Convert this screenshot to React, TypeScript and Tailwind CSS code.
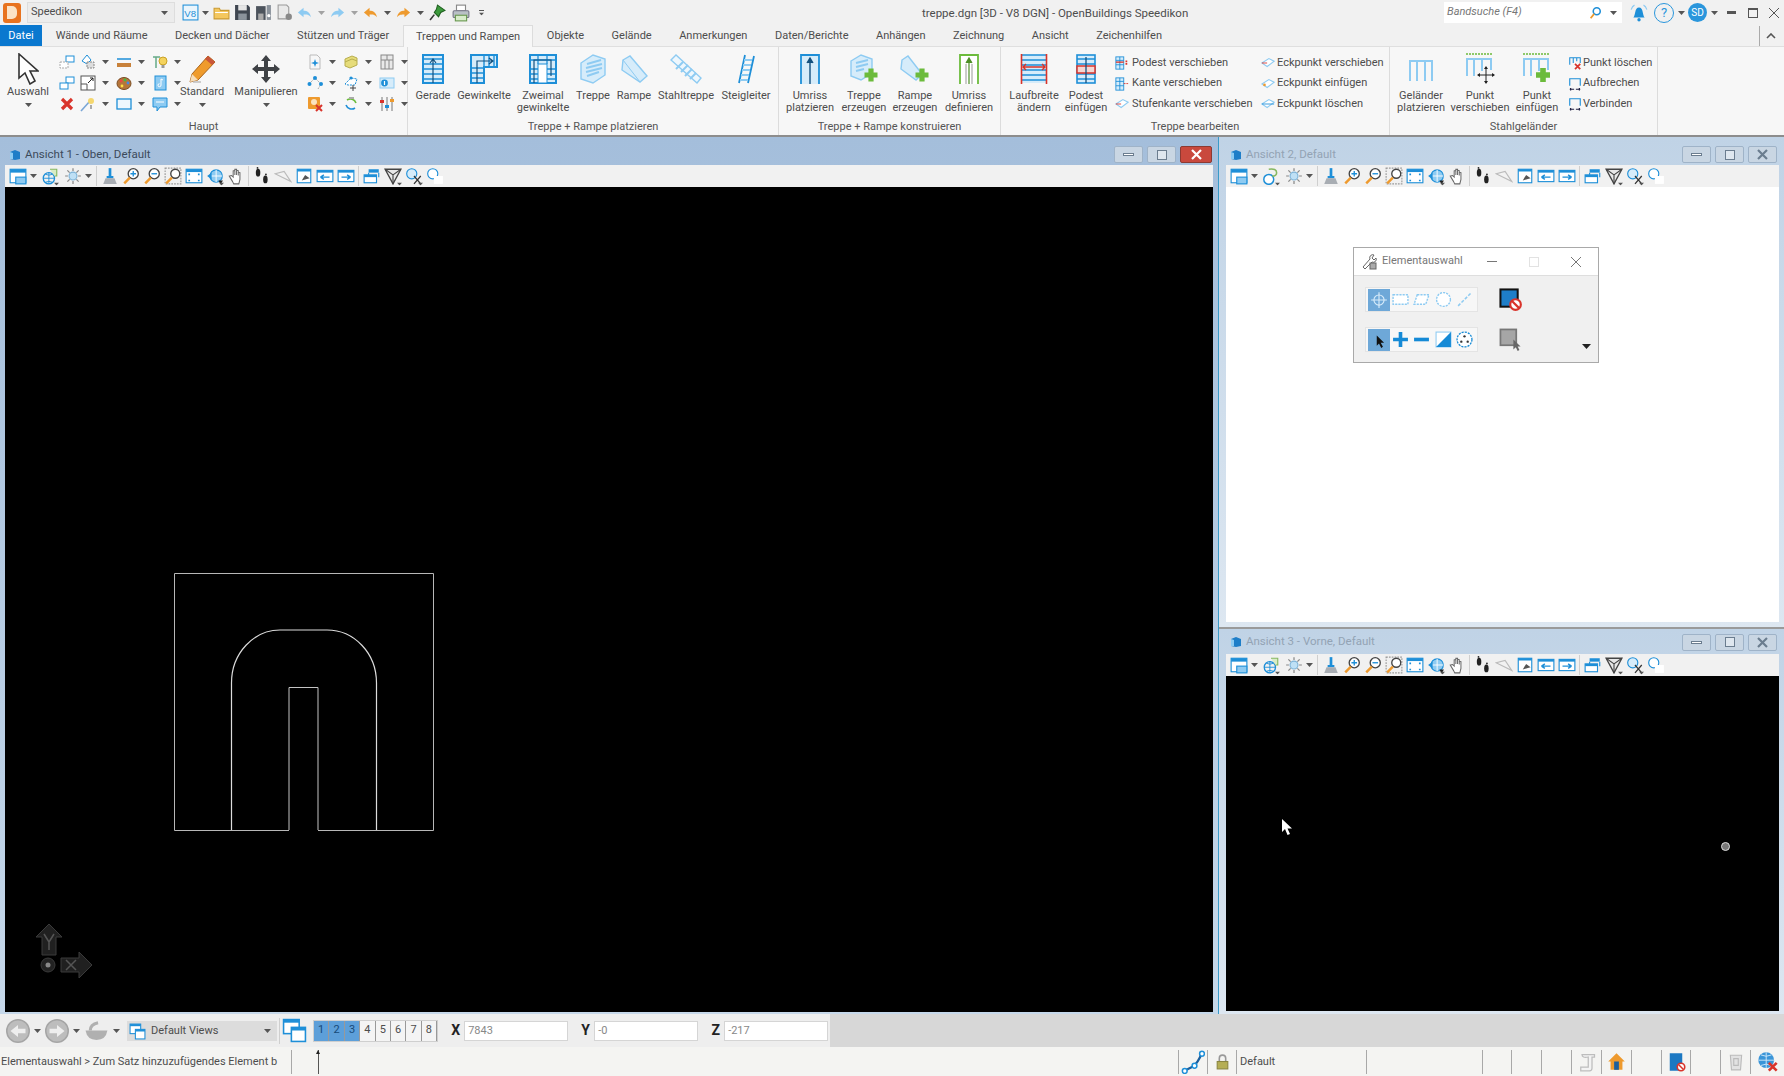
import type { ReactNode } from "react";

const B = "#1e8fd8";
const LB = "#8ecbf2";
const PALE = "#d6ecfa";
const G = "#6cbb3c";
const R = "#d9342b";
const O = "#ee9a2e";

const plus = (x: number, y: number, s = 5, c = G) => (
  <path d={`M${x - s} ${y}H${x + s}M${x} ${y - s}V${y + s}`} stroke={c} strokeWidth={s * 0.8} fill="none" />
);
const cross = (x: number, y: number, s = 3) => (
  <path d={`M${x - s} ${y - s}L${x + s} ${y + s}M${x + s} ${y - s}L${x - s} ${y + s}`} stroke={R} strokeWidth={2} fill="none" />
);

const small: Record<string, ReactNode> = {
  boxes: (
    <>
      <rect x="7" y="2" width="8" height="6" fill="#fff" stroke={B} />
      <rect x="1" y="8" width="8" height="6" fill="#fff" stroke="#aaa" strokeDasharray="2 1" />
    </>
  ),
  boxes2: (
    <>
      <rect x="7" y="2" width="8" height="6" fill="#fff" stroke={B} />
      <rect x="1" y="8" width="8" height="6" fill="#fff" stroke={B} />
    </>
  ),
  shapes: (
    <>
      <path d="M2 7L7 1L11 6L7 10Z" fill="#fff" stroke={B} />
      <rect x="7" y="8" width="7" height="6" fill="#ddd" stroke="#888" strokeDasharray="2 1" />
    </>
  ),
  measure: (
    <>
      <path d="M1 5H15" stroke={B} strokeWidth="1.5" />
      <rect x="1" y="9" width="14" height="4" fill="#c8813a" />
    </>
  ),
  bulbtag: (
    <>
      <path d="M1 3H8M4 3V14" stroke="#6a8" strokeWidth="1.5" />
      <circle cx="11" cy="7" r="4" fill="#f4d35e" stroke="#c9a227" />
      <rect x="9.5" y="11" width="3" height="3" fill="#999" />
    </>
  ),
  resize: (
    <>
      <rect x="1" y="1" width="14" height="14" fill="#fff" stroke="#555" />
      <path d="M1 9H7V15" fill="none" stroke="#555" />
      <path d="M8 8L13 3M10 3H13V6" stroke="#222" fill="none" />
    </>
  ),
  palette: (
    <>
      <ellipse cx="8" cy="8.5" rx="7" ry="6" fill="#b5763a" stroke="#7a4c22" />
      <circle cx="5" cy="6" r="1.4" fill="#e44" />
      <circle cx="9" cy="5" r="1.4" fill="#4b4" />
      <circle cx="12" cy="8" r="1.4" fill="#48e" />
      <circle cx="6" cy="11" r="1.4" fill="#fd4" />
    </>
  ),
  note: (
    <>
      <rect x="3" y="1" width="11" height="14" fill={LB} stroke={B} />
      <path d="M9 4V10M9 4L11 5M9 10A1.5 1.5 0 1 1 7.5 8.7" stroke="#fff" fill="none" />
    </>
  ),
  xred: <path d="M3 3L13 13M13 3L3 13" stroke={R} strokeWidth="3.2" />,
  wand: (
    <>
      <path d="M1 15L10 5" stroke="#7aa6d6" strokeWidth="1.6" />
      <circle cx="11" cy="5" r="3" fill="#f5d76e" />
      <path d="M11 9V13" stroke="#aaa" strokeWidth="2" />
    </>
  ),
  rect: <rect x="1" y="3" width="14" height="10" fill="#eef7fd" stroke={B} strokeWidth="1.3" />,
  bubble: (
    <>
      <path d="M1 2H15V11H8L5 15V11H1Z" fill={LB} stroke={B} />
      <path d="M4 6H12" stroke="#fff" />
    </>
  ),
  docstar: (
    <>
      <path d="M3 1H10L13 4V15H3Z" fill="#f7f7f7" stroke="#bbb" />
      <path d="M8 5L9 8L12 9L9 10L8 13L7 10L4 9L7 8Z" fill={B} />
    </>
  ),
  stack: (
    <>
      <path d="M2 5L9 2L14 4V11L7 14L2 12Z" fill="#e6dc7a" stroke="#b8ae4e" />
      <path d="M2 8L9 5L14 7" stroke="#b8ae4e" fill="none" />
    </>
  ),
  tiles: (
    <>
      <rect x="2" y="1" width="12" height="14" fill="#e9e9e9" stroke="#888" />
      <path d="M2 6H14M8 1V6M6 6V15M10 6V15" stroke="#888" />
    </>
  ),
  nodes: (
    <>
      <path d="M2 9L8 3L14 9L11 14" fill="none" stroke="#aaa" strokeDasharray="2 1" />
      <circle cx="2.5" cy="9" r="2" fill={B} />
      <circle cx="8" cy="3" r="2" fill={B} />
      <circle cx="14" cy="9" r="2" fill={B} />
    </>
  ),
  nodeplus: (
    <>
      <path d="M2 9L8 3L14 4L12 10H5Z" fill="#fff" stroke={B} strokeDasharray="2 1" />
      <circle cx="8" cy="3" r="1.6" fill={B} />
      <path d="M7 13H13M10 10V16" stroke="#444" />
    </>
  ),
  info: (
    <>
      <rect x="1" y="3" width="14" height="10" fill={PALE} stroke={LB} />
      <circle cx="5.5" cy="8" r="3.4" fill={B} />
      <path d="M5.5 6V10" stroke="#fff" strokeWidth="1.2" />
    </>
  ),
  pagex: (
    <>
      <rect x="1" y="1" width="12" height="12" rx="1" fill={O} />
      <circle cx="7" cy="6" r="3" fill="#fbe3c0" />
      {cross(12, 12)}
    </>
  ),
  cycle: (
    <>
      <path d="M4 4A6 6 0 0 1 13 7" stroke={G} strokeWidth="1.6" fill="none" />
      <path d="M12 12A6 6 0 0 1 3 9" stroke={B} strokeWidth="1.6" fill="none" />
      <path d="M6 1H11V3H6Z" fill="#aaa" />
    </>
  ),
  sliders: (
    <>
      <path d="M3 1V15M8 1V15M13 1V15" stroke="#777" />
      <rect x="1" y="4" width="4" height="3" fill={R} />
      <rect x="6" y="9" width="4" height="3" fill={B} />
      <rect x="11" y="3" width="4" height="3" fill={O} />
    </>
  ),
  podest: (
    <>
      <rect x="1" y="1" width="9" height="14" fill={PALE} stroke={B} />
      <path d="M1 5H10M1 10H10M5.5 1V15" stroke={B} />
      <path d="M1 7H10" stroke={R} strokeWidth="1.5" />
      <path d="M13 5V10" stroke={R} strokeWidth="2" strokeDasharray="2 1" />
    </>
  ),
  kante: (
    <>
      <rect x="1" y="1" width="9" height="14" fill={PALE} stroke={B} />
      <path d="M1 5H10M1 10H10M5.5 1V15" stroke={B} />
      <path d="M10 7.5H15" stroke={R} strokeDasharray="2 1" />
    </>
  ),
  blade: (
    <>
      <path d="M1 8L9 3L15 6L7 12Z" fill="#fff" stroke={LB} strokeWidth="1.2" />
      <path d="M1 8L7 8" stroke={R} />
    </>
  ),
  blade2: (
    <>
      <path d="M1 8L9 3L15 6L7 12Z" fill="#fff" stroke={LB} strokeWidth="1.2" />
      <circle cx="4" cy="9" r="1.5" fill={O} />
    </>
  ),
  bladex: (
    <>
      <path d="M1 8L9 3L15 6L7 12Z" fill="#fff" stroke={LB} strokeWidth="1.2" />
      <path d="M1 8H15" stroke={B} />
    </>
  ),
  railx: (
    <>
      <path d="M2 10V2H14V8M6 2V8M10 2V6" fill="none" stroke={B} strokeWidth="1.2" />
      {cross(11, 12)}
    </>
  ),
  brk: (
    <>
      <path d="M2 10V2H14V10" fill="none" stroke={B} strokeWidth="1.3" />
      <path d="M2 14H7M14 14H9M3 12.5V15.5M13 12.5V15.5" stroke="#224" strokeWidth="1.4" />
    </>
  ),
  v8: (
    <>
      <rect x="1" y="1" width="14" height="14" fill="#eaf5fc" stroke={B} />
      <text x="2.2" y="12" fontSize="9" fill={B} fontFamily="Liberation Sans, sans-serif">V8</text>
    </>
  ),
  folder: (
    <>
      <path d="M1 4H6L7 6H15V14H1Z" fill="#f4c75e" stroke="#c99a34" />
      <path d="M2 8H14" stroke="#fff" />
    </>
  ),
  save: (
    <>
      <path d="M1 1H13L15 3V15H1Z" fill="#3f4650" />
      <rect x="4" y="1" width="8" height="5" fill="#e5e5e5" />
      <rect x="4" y="9" width="8" height="6" fill="#8a929b" />
    </>
  ),
  saveall: (
    <>
      <path d="M1 2H10V15H1Z" fill="#4c535c" />
      <rect x="3" y="9" width="5" height="6" fill="#aaa" />
      <path d="M11 1H15V15H11Z" fill="#8a929b" />
      <circle cx="13" cy="11" r="1.5" fill="#fff" />
    </>
  ),
  pagegray: (
    <>
      <path d="M2 1H10L12 3V14H2Z" fill="#e9e9e9" stroke="#999" />
      <circle cx="12" cy="12" r="3" fill="#888" />
    </>
  ),
  undo: <path d="M1 8L7 3V6C11 6 14 8 15 13C13 10 10 10 7 10V13Z" fill={LB} />,
  redo: <path d="M15 8L9 3V6C5 6 2 8 1 13C3 10 6 10 9 10V13Z" fill={LB} />,
  oback: <path d="M1 8L7 3V6C11 6 14 8 15 13C13 10 10 10 7 10V13Z" fill={O} />,
  ofwd: <path d="M15 8L9 3V6C5 6 2 8 1 13C3 10 6 10 9 10V13Z" fill={O} />,
  pin: (
    <>
      <path d="M8 1L15 6L11 8L9 12L5 8L7 5Z" fill="#3c9a3c" stroke="#1f5f1f" />
      <path d="M5 10L1 15" stroke="#333" strokeWidth="1.5" />
    </>
  ),
  print: (
    <>
      <rect x="4" y="1" width="8" height="5" fill="#fff" stroke="#888" />
      <rect x="1" y="6" width="14" height="6" rx="1" fill="#b9c0c6" stroke="#778" />
      <rect x="3" y="10" width="10" height="5" fill="#d8eccb" stroke="#6a9a50" />
    </>
  ),
  view: (
    <>
      <rect x="1" y="2" width="14" height="12" fill="#fff" stroke={B} />
      <rect x="1" y="2" width="14" height="3" fill={B} />
      <rect x="6" y="9" width="9" height="6" fill={LB} stroke={B} />
    </>
  ),
  globe: (
    <>
      <circle cx="7" cy="10" r="5" fill="none" stroke={B} strokeWidth="1.2" />
      <path d="M2 10H12M7 5V15M4 6.5Q7 8 10 6.5M4 13.5Q7 12 10 13.5" stroke={B} strokeWidth=".8" fill="none" />
      <path d="M8 2H14V8H12" fill="#d8ecc5" stroke="#86b862" strokeWidth="1" />
    </>
  ),
  globe2: (
    <>
      <circle cx="6" cy="11" r="4.4" fill="#fff" stroke={B} strokeWidth="1.3" />
      <path d="M6 2Q13 1 13 5Q13 8 9 8" fill="none" stroke="#86b862" strokeWidth="1.4" />
    </>
  ),
  sun: (
    <>
      <circle cx="8" cy="8" r="3.5" fill="#bfe0f5" stroke="#7fb4d8" />
      <path d="M8 1V3.5M8 12.5V15M1 8H3.5M12.5 8H15M3 3L5 5M11 11L13 13M13 3L11 5M5 11L3 13" stroke="#888" strokeWidth="1.1" />
    </>
  ),
  brush: (
    <>
      <path d="M8 1V8" stroke={B} strokeWidth="2.4" />
      <path d="M5 8H11V10H5Z" fill={B} />
      <path d="M4 10H12L14 15H2Z" fill="#a8adb3" />
    </>
  ),
  zin: (
    <>
      <circle cx="10" cy="6" r="4.5" fill="#fff" stroke="#444" strokeWidth="1.2" />
      <path d="M7.5 6H12.5M10 3.5V8.5" stroke={B} strokeWidth="1.2" />
      <path d="M7 9.5L2 14.5" stroke={O} strokeWidth="2.2" />
    </>
  ),
  zout: (
    <>
      <circle cx="10" cy="6" r="4.5" fill="#fff" stroke="#444" strokeWidth="1.2" />
      <path d="M7.5 6H12.5" stroke={B} strokeWidth="1.2" />
      <path d="M7 9.5L2 14.5" stroke={O} strokeWidth="2.2" />
    </>
  ),
  zwin: (
    <>
      <rect x="1" y="1" width="14" height="14" fill="none" stroke="#999" strokeDasharray="1.5 1" />
      <circle cx="10" cy="6" r="4" fill="#fff" stroke="#444" strokeWidth="1.2" />
      <path d="M7 9.5L2 14.5" stroke={O} strokeWidth="2.2" />
    </>
  ),
  fit: (
    <>
      <rect x="1" y="2" width="14" height="12" fill="#fff" stroke={B} />
      <rect x="1" y="2" width="14" height="2.5" fill={B} />
      <path d="M3 6.5H4.5M3 12H4.5M11.5 6.5H13M11.5 12H13" stroke={B} strokeWidth="1.5" />
    </>
  ),
  rotate: (
    <>
      <circle cx="9" cy="8" r="5.5" fill={LB} stroke={B} />
      <path d="M9 2.5V13.5M3.5 8H14.5" stroke="#fff" strokeWidth=".8" />
      <path d="M1 8L5 5V11Z" fill={B} />
      <path d="M11 12L15 12L13 15.5Z" fill="#222" />
    </>
  ),
  hand: (
    <path d="M5 13L2 8L4 7.5L5.5 9V3.5L7 3V7V2L8.5 2V7V3L10 3.2V7.5V4.5L11.5 5V11L10.5 15H6Z" fill="#fff" stroke="#666" strokeWidth=".9" />
  ),
  feet: (
    <>
      <ellipse cx="4.5" cy="5" rx="2" ry="3.5" fill="#222" />
      <ellipse cx="11" cy="11" rx="2" ry="3.5" fill="#222" />
      <circle cx="4" cy="0.8" r=".8" fill="#222" />
      <circle cx="11.5" cy="6.6" r=".8" fill="#222" />
    </>
  ),
  plane: <path d="M1 6L15 13L9 4Z" fill="#f2f2f2" stroke="#bbb" />,
  cam: (
    <>
      <rect x="2" y="2" width="12" height="12" fill="#fff" stroke={B} />
      <rect x="2" y="2" width="12" height="2" fill={B} />
      <path d="M6 12L9 7L13 10L9 11Z" fill="#555" />
    </>
  ),
  prev: (
    <>
      <rect x="1" y="3" width="14" height="10" fill="#fff" stroke={B} />
      <rect x="1" y="3" width="14" height="2" fill={B} />
      <path d="M4 9H12M4 9L7 7M4 9L7 11" stroke={B} strokeWidth="1.3" fill="none" />
    </>
  ),
  next: (
    <>
      <rect x="1" y="3" width="14" height="10" fill="#fff" stroke={B} />
      <rect x="1" y="3" width="14" height="2" fill={B} />
      <path d="M4 9H12M12 9L9 7M12 9L9 11" stroke={B} strokeWidth="1.3" fill="none" />
    </>
  ),
  copy: (
    <>
      <rect x="5" y="2" width="9" height="3" fill={B} />
      <path d="M5 5V7M14 5V9" stroke={B} />
      <rect x="1" y="7" width="11" height="7" fill="#fff" stroke={B} />
      <rect x="1" y="7" width="11" height="2" fill={B} />
    </>
  ),
  funnel: (
    <>
      <path d="M1 2L15 2L8 15Z" fill="#e8e8e8" stroke="#444" strokeWidth="1.2" />
      <path d="M1 2L8 7L15 2M8 7V15" stroke="#444" fill="none" />
    </>
  ),
  clip: (
    <>
      <circle cx="6" cy="6" r="4.5" fill={PALE} stroke={B} />
      <path d="M8 8L14 15M14 8L8 15" stroke="#333" strokeWidth="1.1" />
    </>
  ),
  clip2: (
    <>
      <circle cx="6" cy="6" r="4.5" fill="#fff" stroke={B} />
      <rect x="7" y="8" width="8" height="7" fill="#fff" />
    </>
  ),
  tool: (
    <>
      <path d="M2 13L9 5A3 3 0 0 1 13 1L11 4L13 6L15 4A3 3 0 0 1 11 8L4 15Z" fill="#fff" stroke="#666" />
      <rect x="9" y="9" width="6" height="6" fill="#aaa" stroke="#666" />
    </>
  ),
  bell: (
    <>
      <path d="M3 12C5 10 4 3 8 3C12 3 11 10 13 12Z" fill={B} />
      <circle cx="8" cy="14" r="1.5" fill={B} />
      <path d="M1 5Q2 2 4 1M15 5Q14 2 12 1" stroke={LB} fill="none" />
    </>
  ),
  search: (
    <>
      <circle cx="10" cy="6" r="4" fill="none" stroke={B} strokeWidth="1.8" />
      <path d="M7 9L3 14" stroke={O} strokeWidth="2" />
    </>
  ),
  backc: (
    <>
      <circle cx="8" cy="8" r="7.5" fill="#bdbdbd" stroke="#a5a5a5" />
      <path d="M3 8L8 4V6.5H13V9.5H8V12Z" fill="#eee" />
    </>
  ),
  fwdc: (
    <>
      <circle cx="8" cy="8" r="7.5" fill="#bdbdbd" stroke="#a5a5a5" />
      <path d="M13 8L8 4V6.5H3V9.5H8V12Z" fill="#eee" />
    </>
  ),
  bowl: (
    <>
      <path d="M1 8H15Q14 14 8 14Q2 14 1 8Z" fill="#b0b0b0" />
      <path d="M4 8Q4 4 9 3" stroke="#b0b0b0" strokeWidth="2" fill="none" />
    </>
  ),
  dviews: (
    <>
      <rect x="1" y="1" width="10" height="9" fill="#fff" stroke={B} />
      <rect x="1" y="1" width="10" height="2" fill={B} />
      <rect x="6" y="6" width="9" height="9" fill="#fff" stroke={B} />
      <rect x="6" y="6" width="9" height="2" fill={B} />
    </>
  ),
  path: (
    <>
      <path d="M2 14L8 11Q11 9 14 2" stroke="#1d5f9c" strokeWidth="1.5" fill="none" />
      <circle cx="2.5" cy="14" r="1.6" fill="#fff" stroke={B} />
      <circle cx="9" cy="10.5" r="1.6" fill="#fff" stroke={B} />
      <circle cx="14" cy="2.5" r="1.6" fill="#fff" stroke={B} />
    </>
  ),
  lock: (
    <>
      <path d="M5 8V5A3 3 0 0 1 11 5V8" fill="none" stroke="#999" strokeWidth="1.5" />
      <rect x="3" y="8" width="10" height="7" fill="#b5ae54" stroke="#8a8540" />
    </>
  ),
  scroll: <path d="M4 2H14V4H12V13Q12 15 10 15H3V12H9V4Q4 5 4 2Z" fill="#f3f3f3" stroke="#bdbdbd" />,
  home: (
    <>
      <path d="M8 1L15 8H13V15H3V8H1Z" fill={O} />
      <rect x="6" y="8" width="4" height="7" fill="#1d5f9c" />
    </>
  ),
  book: (
    <>
      <rect x="3" y="1" width="10" height="14" fill="#1c78c2" />
      <circle cx="12" cy="12" r="3" fill="#fff" stroke={R} strokeWidth="1.3" />
      <path d="M10 10L14 14" stroke={R} strokeWidth="1.2" />
    </>
  ),
  docg: (
    <>
      <path d="M3 2H13L12 15H4Z" fill="#e2e2e2" stroke="#bbb" />
      <path d="M6 5H10V11H6Z" fill="none" stroke="#bbb" />
    </>
  ),
  globex: (
    <>
      <circle cx="7" cy="7" r="6" fill="#3a95d8" />
      <path d="M1 7H13M7 1V13M3 3Q7 5 11 3M3 11Q7 9 11 11" stroke="#cfe8fa" strokeWidth=".7" fill="none" />
      {cross(12, 12)}
    </>
  ),
  selRect: <rect x="1" y="3.5" width="14" height="9" fill="#fff" stroke={LB} strokeWidth="1.3" strokeDasharray="2 1" />,
  selPara: <path d="M4 3.5H15L12 12.5H1Z" fill="#fff" stroke={LB} strokeWidth="1.3" strokeDasharray="2 1" />,
  selCirc: <circle cx="8" cy="8" r="6.5" fill="#fff" stroke={LB} strokeWidth="1.3" strokeDasharray="2 1" />,
  selLine: <path d="M2 14L14 2" stroke={LB} strokeWidth="1.4" strokeDasharray="3 1.5" />,
  selAll: (
    <>
      <circle cx="8" cy="8" r="4.5" fill="none" stroke="#d8ecfa" />
      <path d="M8 1V15M1 8H15" stroke="#d8ecfa" />
    </>
  ),
  arrowB: <path d="M6 4L6 13L8 11L10 15L11.5 14L9.5 10.5H12.5Z" fill="#111" />,
  plusB: <path d="M1 8H15M8 1V15" stroke="#158ad6" strokeWidth="3.4" />,
  minusB: <path d="M1 8H15" stroke="#158ad6" strokeWidth="3.4" />,
  invert: (
    <>
      <rect x="1" y="1" width="14" height="14" fill="#fff" stroke="#8ecbf2" />
      <path d="M15 1V15H1Z" fill="#158ad6" />
    </>
  ),
  selDots: (
    <>
      <circle cx="8" cy="8" r="7" fill="#fff" stroke="#158ad6" strokeWidth="1.2" strokeDasharray="2 1" />
      <circle cx="8" cy="5" r="1.1" fill="#333" />
      <circle cx="5" cy="10" r="1.1" fill="#333" />
      <circle cx="11" cy="10" r="1.1" fill="#333" />
    </>
  ),
  noSel: (
    <>
      <rect x="1" y="1" width="12" height="12" fill="#1e7ec8" stroke="#111" strokeWidth="1.4" />
      <circle cx="11.5" cy="11.5" r="3.7" fill="#fff" stroke={R} strokeWidth="1.5" />
      <path d="M9 9L14 14" stroke={R} strokeWidth="1.5" />
    </>
  ),
  grayArrow: (
    <>
      <rect x="1" y="1" width="11" height="11" fill="#a6a6a6" stroke="#777" strokeWidth="1.2" />
      <path d="M10 8L10 15L11.7 13.4L13 16L14.2 15.3L13 12.8H15Z" fill="#666" />
    </>
  ),
};

function I({ n, s = 16, className }: { n: string; s?: number; className?: string }) {
  return (
    <svg width={s} height={s} viewBox="0 0 16 16" className={className ?? "shrink-0"}>
      {small[n]}
    </svg>
  );
}

function Caret({ className }: { className?: string }) {
  return (
    <svg width="7" height="4" viewBox="0 0 7 4" className={className ?? "shrink-0"}>
      <path d="M0 0H7L3.5 4Z" fill="#555" />
    </svg>
  );
}

const stairs = (w: number, h: number) => {
  const rungs = [];
  for (let y = 5; y < h - 1; y += 5) rungs.push(`M1 ${y}H${w - 1}`);
  return rungs.join("");
};

const bigIcons: Record<string, ReactNode> = {
  gerade: (
    <svg width="22" height="30" viewBox="0 0 22 30">
      <rect x="1" y="1" width="20" height="28" fill={PALE} stroke={B} strokeWidth="2" />
      <path d={stairs(22, 30)} stroke={B} strokeWidth="1.5" />
      <path d="M11 29V6M8 9L11 5L14 9" stroke="#14517f" strokeWidth="1.2" fill="none" />
    </svg>
  ),
  gewinkelt: (
    <svg width="28" height="30" viewBox="0 0 28 30">
      <path d="M1 29V1H27V13H14V29Z" fill={PALE} stroke={B} strokeWidth="2" />
      <path d="M1 14H14M1 19H14M1 24H14M14 1V13M19 1V13M24 1V13" stroke={B} strokeWidth="1.4" />
      <path d="M7 29V7H22M19 4L23 7L19 10" stroke="#14517f" strokeWidth="1.2" fill="none" />
    </svg>
  ),
  zweimal: (
    <svg width="28" height="30" viewBox="0 0 28 30">
      <rect x="1" y="1" width="26" height="28" fill={PALE} stroke={B} strokeWidth="2" />
      <rect x="9" y="10" width="9" height="19" fill="#fff" stroke={B} />
      <path d="M1 15H9M1 20H9M1 25H9M18 15H27M18 20H27M18 25H27M1 6H27M9 1V10M18 1V10" stroke={B} strokeWidth="1.3" />
      <path d="M5 29V6H22V22" stroke="#14517f" strokeWidth="1.2" fill="none" />
    </svg>
  ),
  treppe: (
    <svg width="28" height="32" viewBox="0 0 28 32">
      <path d="M2 10L14 2L26 6V22L14 30L2 26Z" fill={PALE} stroke={LB} strokeWidth="1.4" />
      <path d="M8 11L22 7M7 15L23 11M7 19L23 15M8 23L20 19" stroke={LB} strokeWidth="2" />
    </svg>
  ),
  rampe: (
    <svg width="28" height="30" viewBox="0 0 28 30">
      <path d="M3 6L10 2L27 22L20 28L2 16Z" fill={PALE} stroke={LB} strokeWidth="1.4" />
      <path d="M3 6L20 28" stroke={LB} />
    </svg>
  ),
  stahl: (
    <svg width="32" height="30" viewBox="0 0 32 30">
      <path d="M1 6L6 1L31 24L27 29Z" fill="#eef7fd" stroke={LB} strokeWidth="1.4" />
      <path d="M6 15L13 8M11 18L18 11M15 22L22 15M20 25L26 19" stroke={LB} strokeWidth="2" />
    </svg>
  ),
  leiter: (
    <svg width="20" height="30" viewBox="0 0 20 30">
      <path d="M9 1L3 29M18 2L12 29" stroke={B} strokeWidth="1.8" />
      <path d="M8 6H16M7 11H15M6 16H14M5 21H13M4 26H12" stroke={LB} strokeWidth="2" />
    </svg>
  ),
  umrissP: (
    <svg width="20" height="30" viewBox="0 0 20 30">
      <path d="M1 30V1H19V30" fill={PALE} stroke={B} strokeWidth="1.8" />
      <path d="M10 30V5M7 9L10 4L13 9" stroke="#14517f" strokeWidth="1.4" fill="#14517f" />
    </svg>
  ),
  treppeE: (
    <svg width="30" height="30" viewBox="0 0 30 30">
      <path d="M2 7L12 1L23 5V19L12 26L2 22Z" fill={PALE} stroke={LB} strokeWidth="1.4" />
      <path d="M7 9L19 6M7 13L19 10M7 17L15 15" stroke={LB} strokeWidth="2" />
      {plus(22, 21, 6.5)}
    </svg>
  ),
  rampeE: (
    <svg width="30" height="30" viewBox="0 0 30 30">
      <path d="M2 6L8 2L22 20L16 26L1 15Z" fill={PALE} stroke={LB} strokeWidth="1.4" />
      {plus(22, 21, 6.5)}
    </svg>
  ),
  umrissD: (
    <svg width="20" height="30" viewBox="0 0 20 30">
      <path d="M1 30V1H19V30" fill="#fff" stroke={G} strokeWidth="1.8" />
      <path d="M7 30V10M13 30V10" stroke="#999" />
      <path d="M10 30V5M7 9L10 4L13 9" stroke="#4d8f27" strokeWidth="1.2" fill="#4d8f27" />
    </svg>
  ),
  laufbreite: (
    <svg width="28" height="30" viewBox="0 0 28 30">
      <rect x="2" y="1" width="24" height="28" fill={PALE} />
      <path d="M2 1H26M2 6H26M2 11H26M2 16H26M2 21H26M2 26H26" stroke={B} strokeWidth="1.5" />
      <path d="M1.5 0V30M26.5 0V30" stroke={R} strokeWidth="1.6" />
      <path d="M3 13H25M6 10L3 13L6 16M22 10L25 13L22 16" stroke={R} strokeWidth="1.4" fill="none" />
    </svg>
  ),
  podestE: (
    <svg width="20" height="30" viewBox="0 0 20 30">
      <rect x="1" y="1" width="18" height="28" fill={PALE} stroke={B} strokeWidth="1.6" />
      <path d={stairs(20, 30)} stroke={B} strokeWidth="1.3" />
      <rect x="1" y="12" width="18" height="7" fill="#f3d8d4" stroke={R} strokeWidth="1.5" />
      <path d="M10 29V3" stroke="#14517f" strokeWidth="1.3" />
    </svg>
  ),
  gelaender: (
    <svg width="26" height="30" viewBox="0 0 26 30">
      <path d="M1 7H25M2 7V27M9 7V27M17 7V27M24 7V27" stroke={LB} strokeWidth="2" fill="none" />
    </svg>
  ),
  gelaenderV: (
    <svg width="30" height="32" viewBox="0 0 30 32">
      <path d="M1 1H27" stroke={G} strokeWidth="1.6" strokeDasharray="2 1" />
      <path d="M1 6H27M2 6V23M9 6V23M17 6V18M26 6V17" stroke={LB} strokeWidth="2" fill="none" />
      <path d="M21 14V30M13 22H29" stroke="#222" strokeWidth="1" />
      <path d="M21 13L19 16H23ZM21 31L19 28H23ZM12 22L15 20V24ZM30 22L27 20V24Z" fill="#222" />
    </svg>
  ),
  gelaenderE: (
    <svg width="30" height="32" viewBox="0 0 30 32">
      <path d="M1 1H27" stroke={G} strokeWidth="1.6" strokeDasharray="2 1" />
      <path d="M1 6H27M2 6V23M9 6V23M17 6V18M26 6V17" stroke={LB} strokeWidth="2" fill="none" />
      {plus(21, 22, 7)}
    </svg>
  ),
  pencil: (
    <svg width="30" height="30" viewBox="0 0 30 30">
      <path d="M5 20L21 2L28 8L11 26L3 28Z" fill="#ef9b2c" stroke="#a9641a" />
      <path d="M21 2L28 8L25 11L18 5Z" fill="#c9563a" />
      <path d="M3 28L5 20L11 26Z" fill="#f5dcb9" />
      <path d="M6 28H14" stroke="#bbb" strokeWidth="1.4" />
    </svg>
  ),
  move: (
    <svg width="30" height="30" viewBox="0 0 30 30">
      <path d="M15 1L20 7H17V13H23V10L29 15L23 20V17H17V23H20L15 29L10 23H13V17H7V20L1 15L7 10V13H13V7H10Z" fill="#3f4246" />
    </svg>
  ),
  arrow: (
    <svg width="22" height="32" viewBox="0 0 22 32">
      <path d="M2 1V25L8 20L13 31L18 28L13 18H21Z" fill="#fff" stroke="#333" strokeWidth="1.6" />
    </svg>
  ),
};

function Big({ icon, label, second, width, caret }: { icon: string; label: string; second?: string; width: number; caret?: boolean }) {
  return (
    <div className="flex shrink-0 flex-col items-center" style={{ width }}>
      <div className="flex h-[32px] items-center justify-center">{bigIcons[icon]}</div>
      <div className={`${caret ? "mt-[1px]" : "mt-[5px]"} whitespace-nowrap text-center leading-[12px]`}>
        {label}
        {second && <div>{second}</div>}
      </div>
      {caret && <Caret className="mt-[5px]" />}
    </div>
  );
}

function Group({ label, width, last, children }: { label: string; width: number; last?: boolean; children: ReactNode }) {
  return (
    <div
      className={`flex shrink-0 flex-col ${last ? "" : "border-r border-[#dcdcdc]"}`}
      style={{ width }}
    >
      <div className="flex h-[73px] pt-[6px]">{children}</div>
      <div className="h-[14px] text-center leading-[14px] text-[#555]">{label}</div>
    </div>
  );
}

function SmallList({ items, width, iconWidth }: { items: [string, string][]; width: number; iconWidth: number }) {
  return (
    <div className="flex shrink-0 flex-col gap-[4.5px] pt-[2px]" style={{ width }}>
      {items.map(([icon, text]) => (
        <div key={text} className="flex h-[16px] items-center whitespace-nowrap">
          <div className="flex justify-center" style={{ width: iconWidth }}>
            <I n={icon} s={14} />
          </div>
          <span>{text}</span>
        </div>
      ))}
    </div>
  );
}

function MiniGrid({ rows, width }: { rows: string[][]; width: number }) {
  return (
    <div className="flex shrink-0 flex-col gap-[5px] pt-[1px]" style={{ width }}>
      {rows.map((row, r) => (
        <div key={r} className="flex h-[16px] items-center">
          {row.map((name, i) => (
            <span key={i} className="flex items-center">
              {name === "^" ? (
                <Caret className="mx-[4px]" />
              ) : (
                <span className="flex w-[21px] justify-center">
                  <I n={name} />
                </span>
              )}
            </span>
          ))}
        </div>
      ))}
    </div>
  );
}

function TitleBar() {
  const qat = ["folder", "save", "saveall", "pagegray"];
  return (
    <div className="flex h-[25px] shrink-0 items-center bg-[#f1f1f1]">
      <div className="ml-[3px] mr-[6px] flex h-[20px] w-[18px] items-center justify-center rounded-[3px] bg-[#e8731f]">
        <div className="h-[13px] w-[10px] rounded-r-[5px] bg-[#fbe3c6]" />
      </div>
      <div className="flex h-[21px] w-[148px] items-center justify-between border border-[#dddddd] bg-[#ececec] pl-[3px] pr-[6px]">
        Speedikon
        <Caret />
      </div>
      <div className="ml-[7px] flex items-center">
        <I n="v8" s={17} />
        <Caret className="ml-[3px] mr-[4px]" />
        {qat.map((q) => (
          <span key={q} className="mr-[4px]">
            <I n={q} s={17} />
          </span>
        ))}
        <span className="flex items-center gap-[5.5px]">
          <I n="undo" s={15} />
          <Caret className="opacity-50" />
          <I n="redo" s={15} />
          <Caret className="opacity-50" />
          <I n="oback" s={15} />
          <Caret />
          <I n="ofwd" s={15} />
          <Caret />
          <I n="pin" s={17} />
          <I n="print" s={18} />
          <span className="ml-[3px] flex flex-col items-center gap-[1px]">
            <span className="h-px w-[5px] bg-[#555]" />
            <Caret className="scale-75" />
          </span>
        </span>
      </div>
      <div className="ml-[437px] whitespace-nowrap pt-[2px] text-[11.5px]">treppe.dgn [3D - V8 DGN] - OpenBuildings Speedikon</div>
      <div className="ml-auto flex items-center">
        <div className="flex h-[21px] w-[178px] items-center bg-white pl-[3px] pr-[5px] italic text-[#777]">
          Bandsuche (F4)
          <I n="search" s={14} className="ml-auto" />
          <Caret className="ml-[8px]" />
        </div>
        <span className="ml-[8px]">
          <I n="bell" s={18} />
        </span>
        <span className="ml-[6px] flex h-[20px] w-[20px] items-center justify-center rounded-full border-[1.5px] border-[#2a96dc] text-[13px] text-[#2a96dc]">?</span>
        <Caret className="ml-[4px]" />
        <span className="ml-[3px] flex h-[19px] w-[19px] items-center justify-center rounded-full bg-[#2a96dc] text-[10px] text-white">SD</span>
        <Caret className="ml-[4px]" />
        <span className="ml-[9px] h-[3px] w-[9px] bg-[#555]" />
        <span className="ml-[12px] h-[10px] w-[10px] border border-t-2 border-[#555]" />
        <svg width="10" height="10" viewBox="0 0 10 10" className="ml-[11px] mr-[5px]">
          <path d="M0 0L10 10M10 0L0 10" stroke="#555" />
        </svg>
      </div>
    </div>
  );
}

function Tabs() {
  const tabs = [
    "Wände und Räume",
    "Decken und Dächer",
    "Stützen und Träger",
    "Treppen und Rampen",
    "Objekte",
    "Gelände",
    "Anmerkungen",
    "Daten/Berichte",
    "Anhängen",
    "Zeichnung",
    "Ansicht",
    "Zeichenhilfen",
  ];
  return (
    <div className="flex h-[22px] shrink-0 items-stretch border-b border-[#dfdfdf] bg-[#f1f1f1]">
      <div className="flex w-[42px] items-center justify-center bg-[#0a78cf] pt-[1px] text-white">Datei</div>
      <div className="flex">
        {tabs.map((t) => (
          <div
            key={t}
            className={
              t === "Treppen und Rampen"
                ? "relative z-10 -mb-px flex items-center border border-b-0 border-[#dcdcdc] bg-[#f7f7f7] px-[12px] pt-[2px]"
                : "flex items-center px-[13.75px] pt-[2px]"
            }
          >
            {t}
          </div>
        ))}
      </div>
      <div className="ml-auto flex items-center">
        <span className="h-[20px] w-px bg-[#aaa]" />
        <svg width="10" height="6" viewBox="0 0 10 6" className="ml-[6px] mr-[8px]">
          <path d="M1 5L5 1L9 5" stroke="#555" strokeWidth="1.6" fill="none" />
        </svg>
      </div>
    </div>
  );
}

function Ribbon() {
  return (
    <div className="flex h-[90px] shrink-0 border-b-2 border-[#8d8d8d] bg-[#f7f7f7]">
      <Group label="Haupt" width={408}>
        <Big icon="arrow" label="Auswahl" width={56} caret />
        <MiniGrid
          width={120}
          rows={[
            ["boxes", "shapes", "^", "measure", "^", "bulbtag", "^"],
            ["boxes2", "resize", "^", "palette", "^", "note", "^"],
            ["xred", "wand", "^", "rect", "^", "bubble", "^"],
          ]}
        />
        <Big icon="pencil" label="Standard" width={52} caret />
        <Big icon="move" label="Manipulieren" width={76} caret />
        <MiniGrid
          width={103}
          rows={[
            ["docstar", "^", "stack", "^", "tiles", "^"],
            ["nodes", "^", "nodeplus", "^", "info", "^"],
            ["pagex", "^", "cycle", "^", "sliders", "^"],
          ]}
        />
      </Group>
      <Group label="Treppe + Rampe platzieren" width={371}>
        <Big icon="gerade" label="Gerade" width={50} />
        <Big icon="gewinkelt" label="Gewinkelte" width={52} />
        <Big icon="zweimal" label="Zweimal" second="gewinkelte" width={66} />
        <Big icon="treppe" label="Treppe" width={34} />
        <Big icon="rampe" label="Rampe" width={48} />
        <Big icon="stahl" label="Stahltreppe" width={56} />
        <Big icon="leiter" label="Steigleiter" width={64} />
      </Group>
      <Group label="Treppe + Rampe konstruieren" width={222}>
        <Big icon="umrissP" label="Umriss" second="platzieren" width={62} />
        <Big icon="treppeE" label="Treppe" second="erzeugen" width={46} />
        <Big icon="rampeE" label="Rampe" second="erzeugen" width={56} />
        <Big icon="umrissD" label="Umriss" second="definieren" width={52} />
      </Group>
      <Group label="Treppe bearbeiten" width={389}>
        <Big icon="laufbreite" label="Laufbreite" second="ändern" width={66} />
        <Big icon="podestE" label="Podest" second="einfügen" width={38} />
        <div className="w-[7px] shrink-0" />
        <SmallList
          width={146}
          iconWidth={20}
          items={[
            ["podest", "Podest verschieben"],
            ["kante", "Kante verschieben"],
            ["blade", "Stufenkante verschieben"],
          ]}
        />
        <SmallList
          width={130}
          iconWidth={19}
          items={[
            ["blade", "Eckpunkt verschieben"],
            ["blade2", "Eckpunkt einfügen"],
            ["bladex", "Eckpunkt löschen"],
          ]}
        />
      </Group>
      <Group label="Stahlgeländer" width={268}>
        <Big icon="gelaender" label="Geländer" second="platzieren" width={62} />
        <Big icon="gelaenderV" label="Punkt" second="verschieben" width={56} />
        <Big icon="gelaenderE" label="Punkt" second="einfügen" width={58} />
        <SmallList
          width={90}
          iconWidth={17}
          items={[
            ["railx", "Punkt löschen"],
            ["brk", "Aufbrechen"],
            ["brk", "Verbinden"],
          ]}
        />
      </Group>
    </div>
  );
}

function ViewTools({ alt }: { alt?: boolean }) {
  const T = ({ n, caret }: { n: string; caret?: boolean }) => (
    <span className="relative flex w-[21px] shrink-0 justify-center">
      <I n={n} s={18} />
      {caret && <Caret className="absolute bottom-[-1px] right-[0px] scale-75" />}
    </span>
  );
  const Sep = () => <span className="mx-[2px] h-[20px] w-px shrink-0 bg-[#cfcfcf]" />;
  return (
    <div className="flex h-[22px] shrink-0 items-center bg-[#f1f1f1] pl-[2px]">
      <T n="view" />
      <Caret className="mx-[2px]" />
      <T n={alt ? "globe2" : "globe"} caret />
      <span className="w-[2px]" />
      <T n="sun" />
      <Caret className="mx-[2px]" />
      <Sep />
      <T n="brush" />
      <T n="zin" />
      <T n="zout" />
      <T n="zwin" />
      <T n="fit" />
      <T n="rotate" caret />
      <T n="hand" />
      <Sep />
      <T n="feet" />
      <T n="plane" />
      <T n="cam" />
      <T n="prev" />
      <T n="next" />
      <Sep />
      <T n="copy" />
      <T n="funnel" caret />
      <T n="clip" caret />
      <T n="clip2" />
    </div>
  );
}

function WinButtons({ active, gapRight }: { active?: boolean; gapRight: number }) {
  const btn = "flex h-[17px] w-[29px] items-center justify-center rounded-[2px] border border-[#9fb3c8] bg-[#c9d6e3]";
  return (
    <div className="ml-auto flex gap-[4px]" style={{ marginRight: gapRight }}>
      <div className={btn}>
        <span className="h-[3px] w-[11px] border border-[#6b7d8f] bg-white" />
      </div>
      <div className={btn}>
        <span className="flex h-[10px] w-[10px] items-center justify-center border border-[#6b7d8f] bg-[#dfe7ef]" />
      </div>
      <div className={active ? "flex h-[17px] w-[32px] items-center justify-center rounded-[2px] border border-[#8d3a32] bg-[#c9493d]" : btn}>
        <svg width="11" height="11" viewBox="0 0 11 11">
          <path d="M1 1L10 10M10 1L1 10" stroke={active ? "#fff" : "#6b7d8f"} strokeWidth="2.2" />
        </svg>
      </div>
    </div>
  );
}

function ViewWindow({
  title,
  active,
  tall,
  alt,
  className,
  right,
  children,
}: {
  title: string;
  active?: boolean;
  tall?: boolean;
  alt?: boolean;
  className: string;
  right: number;
  children: ReactNode;
}) {
  return (
    <div
      className={`relative flex flex-col pb-[2px] pr-[5px] ${className} ${
        active ? "bg-gradient-to-b from-[#a4bedb] to-[#c6d8ea]" : "bg-gradient-to-b from-[#c0d3e6] to-[#dde7f1]"
      }`}
    >
      <div className={`flex shrink-0 items-center ${tall ? "h-[28px] pt-[7px]" : "h-[25px] pt-[1px]"}`}>
        <svg width="12" height="12" viewBox="0 0 12 12" className="ml-[4px] mr-[4px] shrink-0">
          <path d="M1 3L6 1L11 3V10L6 11L1 10Z" fill="#1e7ec8" />
          <path d="M1 3L4 4V10H1Z" fill="#8ecbf2" />
        </svg>
        <span className={`text-[11.5px] ${active ? "text-[#3c4a5a]" : "text-[#93a3b4]"}`}>{title}</span>
        <WinButtons active={active} gapRight={right} />
      </div>
      <ViewTools alt={alt} />
      {children}
    </div>
  );
}

function Triad() {
  return (
    <svg width="60" height="60" viewBox="0 0 60 60" className="absolute bottom-[30px] left-[28px]">
      <path d="M3 15L16 2L29 15H23V33H9V15Z" fill="#202020" stroke="#3a3a3a" />
      <path d="M11 12L16 20L21 12M16 20V28" stroke="#555" strokeWidth="1.5" fill="none" />
      <circle cx="15" cy="43" r="7" fill="#222" stroke="#3a3a3a" />
      <circle cx="15" cy="43" r="2.5" fill="#888" />
      <path d="M28 36H46V30L59 43L46 56V50H28Z" fill="#202020" stroke="#3a3a3a" />
      <path d="M33 38L43 48M43 38L33 48" stroke="#555" strokeWidth="1.5" />
    </svg>
  );
}

function Drawing() {
  return (
    <svg width="261" height="260" viewBox="0 0 261 260" className="absolute left-[169px] top-[386px]">
      <path d="M115 257.5H0.5V0.5H259.5V257.5H144" fill="none" stroke="#b8b8b8" />
      <path
        d="M57.5 257V110C57.5 80 80 57 106 57H153C180 57 202.5 80 202.5 110V257"
        fill="none"
        stroke="#dcdcdc"
        strokeWidth="1.2"
      />
      <path d="M115 257V114.5H144V257" fill="none" stroke="#c4c4c4" />
    </svg>
  );
}

function ElementDialog() {
  const first = ["selAll", "selRect", "selPara", "selCirc", "selLine"];
  const second = ["arrowB", "plusB", "minusB", "invert", "selDots"];
  const Row = ({ items }: { items: string[] }) => (
    <div className="flex h-[25px] w-[113px] items-center border border-[#e4e4e4] bg-[#f7f7f7] pl-[2px]">
      {items.map((n, i) => (
        <span
          key={n}
          className={`flex h-[22px] w-[21.5px] items-center justify-center ${i === 0 ? "bg-[#6ea8d8]" : ""}`}
        >
          <I n={n} s={i === 0 ? 18 : 17} />
        </span>
      ))}
    </div>
  );
  return (
    <div className="absolute left-[134px] top-[110px] z-20 w-[246px] border border-[#a9a9a9] bg-[#f0f0f0]">
      <div className="flex h-[28px] items-center border-b border-[#dedede] bg-white pl-[7px]">
        <I n="tool" s={16} />
        <span className="ml-[5px] w-[80px] whitespace-nowrap text-[#777]">Elementauswahl</span>
        <span className="ml-[25px] h-px w-[10px] bg-[#777]" />
        <span className="ml-[32px] h-[10px] w-[10px] border border-[#e2e2e2]" />
        <svg width="10" height="10" viewBox="0 0 10 10" className="ml-[32px]">
          <path d="M0 0L10 10M10 0L0 10" stroke="#777" />
        </svg>
      </div>
      <div className="flex h-[86px] flex-col gap-[15px] pl-[11px] pt-[11px]">
        <div className="flex items-center">
          <Row items={first} />
          <span className="ml-[21px]">
            <I n="noSel" s={23} />
          </span>
        </div>
        <div className="flex items-center">
          <Row items={second} />
          <span className="ml-[21px]">
            <I n="grayArrow" s={23} />
          </span>
          <svg width="9" height="5" viewBox="0 0 9 5" className="ml-[60px] mt-[14px]">
            <path d="M0 0H9L4.5 5Z" fill="#222" />
          </svg>
        </div>
      </div>
    </div>
  );
}

function Workspace() {
  return (
    <div className="flex min-h-0 flex-1 gap-px bg-[#3a9bc8]">
      <ViewWindow title="Ansicht 1 - Oben, Default" active tall className="w-[1218px] shrink-0 pl-[5px]" right={1}>
        <div className="relative flex-1 bg-black">
          <Drawing />
          <Triad />
        </div>
      </ViewWindow>
      <div className="flex min-w-0 flex-1 flex-col gap-[2px] bg-[#9a9a9a]">
        <ViewWindow title="Ansicht 2, Default" tall alt className="h-[490px] shrink-0 pl-[7px]" right={2}>
          <div className="mb-[3px] flex-1 bg-white" />
          <ElementDialog />
        </ViewWindow>
        <ViewWindow title="Ansicht 3 - Vorne, Default" className="flex-1 pl-[7px]" right={2}>
          <div className="relative mb-[1px] flex-1 bg-black">
            <svg width="12" height="18" viewBox="0 0 12 18" className="absolute left-[55px] top-[142px]">
              <path d="M1 1V14L4 11L6.5 17L9 16L6.5 10.5H11Z" fill="#fff" />
            </svg>
            <span className="absolute left-[495px] top-[166px] h-[9px] w-[9px] rounded-full border border-[#ddd] bg-[#777]" />
          </div>
        </ViewWindow>
      </div>
    </div>
  );
}

function NavBar() {
  const CoordField = ({ axis, value }: { axis: string; value: string }) => (
    <div className="flex items-center">
      <span className="w-[15px] text-center text-[14px] font-bold text-[#222]">{axis}</span>
      <div className="ml-[1px] flex h-[20px] w-[104px] items-center border border-[#d5d5d5] bg-white pl-[3px] pt-[1px] text-[#888]">
        {value}
      </div>
    </div>
  );
  return (
    <div className="flex h-[33px] shrink-0 items-center bg-[#d7d7d7]">
      <div className="flex h-full w-[830px] items-center bg-[#eeeeee] pl-[6px]">
        <I n="backc" s={24} />
        <Caret className="mx-[4px]" />
        <I n="fwdc" s={24} />
        <Caret className="mx-[4px]" />
        <I n="bowl" s={25} />
        <Caret className="ml-[4px] mr-[7px]" />
        <div className="flex h-[20px] w-[150px] items-center justify-between bg-[#dcdcdc] pl-[2px] pr-[6px]">
          <span className="flex items-center gap-[5px] pt-[1px]">
            <I n="dviews" s={17} />
            Default Views
          </span>
          <Caret />
        </div>
        <span className="mx-[2px] h-[26px] w-px bg-[#cfcfcf]" />
        <I n="dviews" s={25} />
        <div className="ml-[6px] flex h-[22px] border border-[#cfcfcf]">
          {["1", "2", "3", "4", "5", "6", "7", "8"].map((n, i) => (
            <span
              key={n}
              className={`flex w-[15.4px] items-center justify-center border-r border-[#999] ${
                i < 3 ? "bg-[#5d9fd9] text-[#174a78]" : "bg-[#f4f4f4]"
              }`}
            >
              {n}
            </span>
          ))}
        </div>
        <div className="ml-[10px] flex gap-[10px]">
          <CoordField axis="X" value="7843" />
          <CoordField axis="Y" value="-0" />
          <CoordField axis="Z" value="-217" />
        </div>
      </div>
    </div>
  );
}

function StatusBar() {
  const Cell = ({ width, children }: { width: number; children?: ReactNode }) => (
    <div className="flex h-[24px] shrink-0 items-center justify-center border-r border-[#a8a8a8]" style={{ width }}>
      {children}
    </div>
  );
  return (
    <div className="flex h-[29px] shrink-0 items-center bg-[#f4f4f2]">
      <div className="flex h-[24px] w-[292px] shrink-0 items-center whitespace-nowrap border-r border-[#a8a8a8] pl-[1px] pt-[2px]">
        Elementauswahl &gt; Zum Satz hinzuzufügendes Element b
      </div>
      <div className="flex h-[24px] w-[887px] shrink-0 border-r border-[#a8a8a8] pl-[26px]">
        <span className="relative h-full w-px bg-[#555]">
          <span className="absolute left-[-2px] top-0 h-0 w-0 border-x-[2.5px] border-b-[4px] border-x-transparent border-b-[#222]" />
        </span>
      </div>
      <Cell width={29}>
        <I n="path" s={24} />
      </Cell>
      <Cell width={29}>
        <I n="lock" s={17} />
      </Cell>
      <div className="flex h-[24px] w-[130px] shrink-0 items-center border-r border-[#a8a8a8] pl-[3px] pt-[2px]">Default</div>
      <Cell width={116} />
      <Cell width={29} />
      <Cell width={30} />
      <Cell width={30} />
      <Cell width={30}>
        <I n="scroll" s={20} />
      </Cell>
      <Cell width={30}>
        <I n="home" s={19} />
      </Cell>
      <Cell width={30} />
      <Cell width={29}>
        <I n="book" s={20} />
      </Cell>
      <Cell width={30} />
      <Cell width={30}>
        <I n="docg" s={18} />
      </Cell>
      <div className="flex w-[33px] justify-center">
        <I n="globex" s={21} />
      </div>
    </div>
  );
}

export default function App() {
  return (
    <div className="flex h-[1076px] w-[1784px] flex-col overflow-hidden bg-[#f1f1f1] font-['Roboto',sans-serif] text-[11px] text-[#4d4d4d]">
      <TitleBar />
      <Tabs />
      <Ribbon />
      <Workspace />
      <NavBar />
      <StatusBar />
    </div>
  );
}
